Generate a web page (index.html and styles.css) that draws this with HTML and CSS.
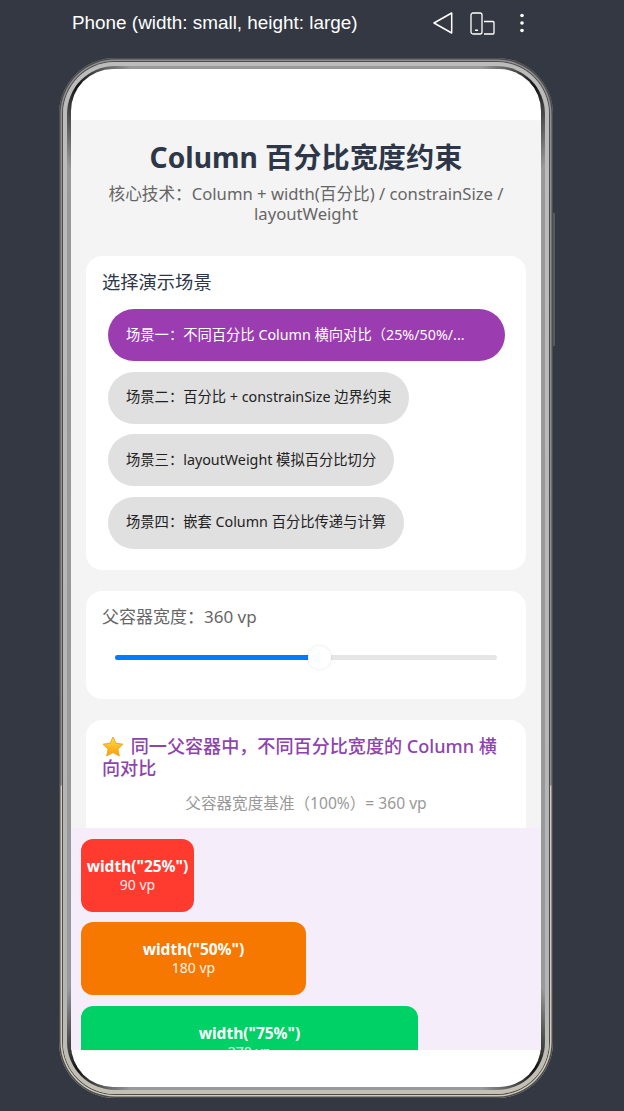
FILE: index.html
```html
<!DOCTYPE html>
<html lang="en">
<head>
  <meta charset="UTF-8" />
  <title>Column 百分比宽度约束</title>
  <link rel="stylesheet" href="styles.css">
</head>
<body>

<header class="topbar">
  <span class="device-name">Phone (width: small, height: large)</span>
  <div class="topbar-icons">
    <svg class="icon-back" width="20" height="22" viewBox="0 0 20 22"><path d="M18.700 1 L1 11 L18.700 21 Z" fill="none" stroke="#fff" stroke-width="1.5" stroke-linejoin="round"/></svg>
    <svg class="icon-fold" width="25" height="23" viewBox="0 0 25 23"><rect x="1" y="1" width="11" height="21" rx="2" fill="none" stroke="#fff" stroke-width="1.3"/><rect x="5" y="17.500" width="3" height="1.500" fill="#fff"/><path d="M14 9.500 H23 Q24 9.500 24 10.500 V21 Q24 22 23 22 H14" fill="none" stroke="#fff" stroke-width="1.3"/></svg>
    <svg class="icon-more" width="6" height="20" viewBox="0 0 6 20"><circle cx="3" cy="2.500" r="1.800" fill="#fff"/><circle cx="3" cy="10" r="1.800" fill="#fff"/><circle cx="3" cy="17.500" r="1.800" fill="#fff"/></svg>
  </div>
</header>

<div class="phone">
  <div class="side-key"></div>
  <div class="phone-rim">
    <div class="phone-bezel">
      <div class="screen">
        <div class="status-area"></div>
        <main class="content">
          <h1 class="title">Column 百分比宽度约束</h1>
          <p class="subtitle">核心技术：Column + width(百分比) / constrainSize / layoutWeight</p>

          <section class="card card-scenes">
            <h2 class="card-title">选择演示场景</h2>
            <div class="scene-list">
              <button class="scene-btn active">场景一：不同百分比 Column 横向对比（25%/50%/...</button>
              <button class="scene-btn">场景二：百分比 + constrainSize 边界约束</button>
              <button class="scene-btn">场景三：layoutWeight 模拟百分比切分</button>
              <button class="scene-btn">场景四：嵌套 Column 百分比传递与计算</button>
            </div>
          </section>

          <section class="card card-slider">
            <div class="slider-label">父容器宽度：360 vp</div>
            <div class="slider">
              <div class="slider-fill"></div>
              <div class="slider-thumb"></div>
            </div>
          </section>

          <section class="card card-demo">
            <h3 class="demo-title"><svg class="star" width="22" height="21" viewBox="0 0 22 21"><defs><linearGradient id="starFill" x1="0" y1="0" x2="0" y2="1"><stop offset="0" stop-color="#fde047"/><stop offset="1" stop-color="#fb9a0c"/></linearGradient></defs><path d="M11 1 L14 7.300 L21 8.200 L15.900 13 L17.300 20 L11 16.500 L4.700 20 L6.100 13 L1 8.200 L8 7.300 Z" fill="url(#starFill)" stroke="#f5a623" stroke-width="1" stroke-linejoin="round"/></svg> 同一父容器中，不同百分比宽度的 Column 横向对比</h3>
            <p class="demo-base">父容器宽度基准（100%）= 360 vp</p>
          </section>

          <div class="bars">
            <div class="bar bar-red"><b>width("25%")</b><span>90 vp</span></div>
            <div class="bar bar-orange"><b>width("50%")</b><span>180 vp</span></div>
            <div class="bar bar-green"><b>width("75%")</b><span>270 vp</span></div>
          </div>
        </main>
        <div class="bottom-area"></div>
      </div>
    </div>
  </div>
</div>

</body>
</html>
```

FILE: styles.css
```css
* {
  box-sizing: border-box;
}

html, body {
  height: 100%;
}

body {
  margin: 0;
  background-color: #333842;
  font-family: "Noto Sans", "Noto Sans CJK SC", sans-serif;
  overflow: hidden;
}

.topbar {
  height: 58px;
  padding: 0 0 12px 72px;
  display: flex;
  align-items: center;
  justify-content: space-between;
}

.device-name {
  color: #fff;
  font-family: "Liberation Sans", sans-serif;
  font-size: 18.900px;
}

.topbar-icons {
  display: flex;
  align-items: center;
  gap: 17px;
  margin-right: 99px;
}

.icon-more {
  margin-left: 7px;
}

/* outer metal band, silver on top and champagne from the lower part down */
.phone {
  position: relative;
  width: 494px;
  height: 1040px;
  margin-left: 59px;
  padding: 4px;
  border-radius: 56px;
  background: linear-gradient(to bottom, #8f8f8f 0%, #8f8f8f 69.900%, #cfcaba 70%, #cfcaba 100%);
  box-shadow: inset 0 0 0 1.500px #4c4c4c;
}

.side-key {
  position: absolute;
  right: -2px;
  top: 155px;
  width: 2px;
  height: 133px;
  background-color: #55585c;
}

.phone-rim {
  height: 100%;
  padding: 4px;
  border-radius: 52px;
  background: linear-gradient(to bottom, #bcbcbc 0%, #b4b4b4 90%, #c4c1b4 100%);
  box-shadow: 0 0 0 1px #4e4e4e;
}

/* conic stops darken the bezel only right at the four corners */
.phone-bezel {
  height: 100%;
  padding: 3px 4px;
  border-radius: 48px;
  background: conic-gradient(#999 0deg, #999 19deg, #111 25deg, #999 30deg, #999 150deg, #111 155deg, #999 161deg, #999 199deg, #111 205deg, #999 210deg, #999 330deg, #111 335deg, #999 341deg, #999 360deg);
}

.screen {
  height: 100%;
  border-radius: 42px;
  background-color: #fff;
  overflow: hidden;
  display: flex;
  flex-direction: column;
}

.status-area {
  height: 51px;
  flex-shrink: 0;
}

.bottom-area {
  height: 37px;
  flex-shrink: 0;
}

.content {
  height: 930px;
  flex-shrink: 0;
  background-color: #f4f4f4;
  padding: 0 15px;
  overflow: hidden;
  position: relative;
}

.title {
  margin: 19px 0 0;
  font-size: 28.200px;
  line-height: 36px;
  font-weight: 700;
  color: #2d3748;
  text-align: center;
}

.subtitle {
  margin: 9px 0 0;
  padding: 0 15px;
  font-size: 16.650px;
  line-height: 20px;
  color: #666;
  text-align: center;
}

.card {
  background-color: #fff;
  border-radius: 16px;
  padding: 16px;
}

.card-scenes {
  height: 314px;
  margin-top: 32px;
}

.card-title {
  margin: 0;
  font-size: 18.300px;
  line-height: 20px;
  font-weight: 400;
  color: #2d3748;
}

.scene-list {
  margin-top: 17px;
  margin-left: 6px;
  margin-right: 5px;
  display: flex;
  flex-direction: column;
  align-items: flex-start;
  gap: 10.500px;
}

.scene-btn {
  height: 52px;
  max-width: 100%;
  padding: 0 18px 1px;
  border: none;
  border-radius: 26px;
  background-color: #e0e0e0;
  color: #222;
  font-family: inherit;
  font-size: 14.300px;
  line-height: 18px;
  white-space: nowrap;
}

.scene-btn.active {
  width: 100%;
  background-color: #9b3cb0;
  color: #fff;
  text-align: left;
}

.card-slider {
  height: 108px;
  margin-top: 21px;
}

.slider-label {
  font-size: 17px;
  line-height: 20px;
  color: #666;
}

.slider {
  position: relative;
  height: 5px;
  margin: 28px 13px 0;
  border-radius: 3px;
  background-color: #e6e6e6;
}

.slider-fill {
  width: 204px;
  height: 100%;
  border-radius: 3px;
  background-color: #007dff;
}

.slider-thumb {
  position: absolute;
  left: 193px;
  top: -9px;
  width: 23px;
  height: 23px;
  border-radius: 50%;
  background-color: #fff;
  box-shadow: 0 0 3px rgba(0,0,0,0.12);
}

.card-demo {
  height: 140px;
  margin-top: 21px;
  padding-top: 15px;
}

.demo-title {
  margin: 0;
  font-size: 18.100px;
  line-height: 22px;
  font-weight: 500;
  color: #8e44ad;
}

.star {
  margin-right: 2px;
  vertical-align: -4px;
}

.demo-base {
  margin: 14px 0 0;
  font-size: 15.600px;
  line-height: 20px;
  color: #999;
  text-align: center;
}

.bars {
  position: absolute;
  left: 0;
  right: 0;
  top: 708px;
  bottom: 0;
  padding: 10.500px 10px;
  background-color: #f5eefa;
  display: flex;
  flex-direction: column;
  gap: 10.500px;
}

.bar {
  height: 73px;
  flex-shrink: 0;
  border-radius: 12px;
  color: #fff;
  display: flex;
  flex-direction: column;
  align-items: center;
  justify-content: center;
}

.bar b {
  margin-bottom: 1px;
  font-size: 15.500px;
  line-height: 18px;
  font-weight: 700;
}

.bar span {
  font-size: 14px;
  line-height: 18px;
  opacity: 0.9;
}

.bar-red {
  width: 113px;
  background-color: #ff3b30;
}

.bar-orange {
  width: 225px;
  background-color: #f77800;
}

.bar-green {
  width: 337px;
  background-color: #00d166;
}
```
